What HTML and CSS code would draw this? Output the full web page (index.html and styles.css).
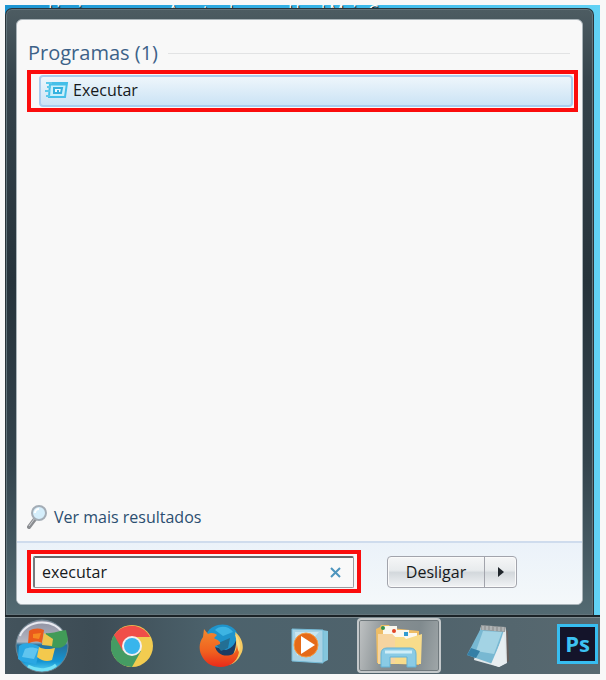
FILE: index.html
```html
<!DOCTYPE html>
<html lang="pt-BR">
<head>
    <meta charset="UTF-8">
    <meta name="viewport" content="width=device-width, initial-scale=1.0">
    <title>Menu Iniciar - Executar</title>
    <link rel="stylesheet" href="styles.css">
</head>
<body>

<div class="desktop">
    <!-- Desktop icon labels, mostly hidden behind the menu -->
    <div class="labels" aria-hidden="true">
        <span>Lixeira</span>
        <span>Avast.ash</span>
        <span>Hard Mais Cao</span>
    </div>

    <!-- Start menu -->
    <main class="menu">
        <div class="panel">
            <section class="results">
                <h1 class="group-title">Programas (1)</h1>
                <div class="highlight">
                    <button type="button" class="result">
                        <svg width="24" height="18" viewBox="0 0 24 18">
                            <path d="M5 2H22L20 16H4Z" fill="#c9effa" stroke="#45bfe8" stroke-width="2"/>
                            <path d="M5 3H22" stroke="#45bfe8" stroke-width="3"/>
                            <path d="M9 7H17L16 12H9Z" fill="#eefaff" stroke="#36b2df" stroke-width="2"/>
                            <path d="M12 9H14V11H12Z" fill="#36b2df"/>
                            <path d="M1 2H7M2 6H6M0 10H5M1 15H5" stroke="#5cc9eb" stroke-width="2"/>
                        </svg>
                        Executar
                    </button>
                </div>
                <a href="#" class="more">
                    <svg width="22" height="26" viewBox="0 0 22 26">
                        <path d="M2 23L8 15" stroke="#8b8d91" stroke-width="4" stroke-linecap="round"/>
                        <path d="M2 22L8 14" stroke="#d0d2d5" stroke-width="1"/>
                        <circle cx="12" cy="9" r="7" fill="#d5eefb" stroke="#a4adb6" stroke-width="2"/>
                        <path d="M8 9a4 4 0 0 1 4-4" stroke="#fff" stroke-width="2" fill="none"/>
                    </svg>
                    Ver mais resultados
                </a>
            </section>

            <form class="footer">
                <div class="highlight search">
                    <input type="text" class="search-input" value="executar" aria-label="Pesquisar programas e arquivos">
                    <button type="button" class="clear" aria-label="Limpar">
                        <svg width="12" height="12" viewBox="0 0 12 12">
                            <path d="M1 2L10 11M10 2L1 11" stroke="#4d94bd" stroke-width="2"/>
                        </svg>
                    </button>
                </div>
                <div class="shutdown">
                    <button type="button" class="shutdown-main">Desligar</button>
                    <button type="button" class="shutdown-more" aria-label="Mais opções">
                        <svg width="6" height="10" viewBox="0 0 6 10">
                            <path d="M0 0L6 5L0 10Z" fill="#20262c"/>
                        </svg>
                    </button>
                </div>
            </form>
        </div>
    </main>

    <!-- Taskbar -->
    <nav class="taskbar">
        <button type="button" class="task start" aria-label="Iniciar">
            <svg width="56" height="54" viewBox="0 0 56 54">
                <defs>
                    <linearGradient id="orb" x1="0" y1="0" x2="0" y2="1">
                        <stop offset="0" stop-color="#8d8fa0"/>
                        <stop offset=".42" stop-color="#b4b7c2"/>
                        <stop offset=".48" stop-color="#26719c"/>
                        <stop offset=".8" stop-color="#1696d4"/>
                        <stop offset="1" stop-color="#5cd6f5"/>
                    </linearGradient>
                </defs>
                <circle cx="28" cy="27" r="26" fill="url(#orb)" stroke="#6d8490" stroke-width="1"/>
                <path d="M6 17C12 0 43 -2 50 17" fill="none" stroke="#e6e8ee" stroke-width="2"/>
                <path d="M15 12C20 9 25 9 30 11L28 24C23 22 19 22 14 25Z" fill="#ea5a1c"/>
                <path d="M19 15L27 14L25 20L19 19Z" fill="#f68a22"/>
                <path d="M32 14C38 15 43 12 52 11L54 20C52 29 45 30 38 28L30 25Z" fill="#419b57"/>
                <path d="M30 14L39 20L38 27L28 26Z" fill="#efc54d"/>
                <path d="M5 27C12 22 21 25 26 28L22 46C15 43 9 44 4 40Z" fill="#2aa7e3"/>
                <path d="M11 30C15 28 20 28 24 30L20 40L8 38Z" fill="#60c5ef"/>
                <path d="M25 28C30 31 37 30 41 29L38 41C33 43 28 42 23 38Z" fill="#f3c94d"/>
                <path d="M14 47C25 53 36 51 42 46" fill="none" stroke="#74e1f6" stroke-width="3"/>
            </svg>
        </button>
        <button type="button" class="task" aria-label="Chrome">
            <svg width="42" height="42" viewBox="0 0 42 42">
                <circle cx="21" cy="21" r="21" fill="#f2cc50"/>
                <path d="M21 21L3 10A21 21 0 0 0 21 42L30 26Z" fill="#459c63"/>
                <path d="M21 21L12 26L3 10A21 21 0 0 1 39 12H21Z" fill="#f04e48"/>
                <circle cx="21" cy="21" r="10" fill="#f3eff0"/>
                <circle cx="21" cy="21" r="8" fill="#38b5ec"/>
            </svg>
        </button>
        <button type="button" class="task" aria-label="Firefox">
            <svg width="44" height="44" viewBox="0 0 44 44">
                <defs>
                    <linearGradient id="fox" x1="0" y1="0" x2="0" y2="1">
                        <stop offset="0" stop-color="#f28a2e"/>
                        <stop offset=".6" stop-color="#f0601f"/>
                        <stop offset="1" stop-color="#e92a1a"/>
                    </linearGradient>
                </defs>
                <circle cx="23" cy="20" r="18" fill="#1c3b62"/>
                <path d="M8 9C14 -2 34 -3 39 11C37 18 34 24 27 26L16 23L10 17Z" fill="#1f94cb"/>
                <path d="M16 6C21 1 30 2 34 8L24 12Z" fill="#3db4e3"/>
                <path d="M17 20L31 14L29 24L22 27Z" fill="#236f94"/>
                <path d="M36 8C43 13 46 23 42 30C38 39 31 42 27 40C36 32 39 20 36 8Z" fill="#f6cb62"/>
                <path d="M5 5L9 10C12 8 16 9 18 11L15 14C18 16 22 17 21 20L16 22C17 30 26 34 34 30C37 28 38 23 38 18C42 25 40 33 35 38C26 46 10 44 4 34C-1 27 0 18 4 13Z" fill="url(#fox)"/>
                <path d="M36 10C41 15 42 22 40 28C38 25 38 17 36 10Z" fill="#f9dd86"/>
            </svg>
        </button>
        <button type="button" class="task" aria-label="Media Player">
            <svg width="38" height="36" viewBox="0 0 38 36">
                <path d="M31 2L37 3V32L31 35Z" fill="#84c6dd"/>
                <path d="M1 1L32 2V35L1 33Z" fill="#a9d3e5" stroke="#74bad6"/>
                <path d="M4 4L28 4L6 28Z" fill="#c8e5f0"/>
                <circle cx="15" cy="17" r="12" fill="#e56a18" stroke="#f39a43" stroke-width="1"/>
                <path d="M10 8L24 17L10 26Z" fill="#fff"/>
            </svg>
        </button>
        <button type="button" class="task active" aria-label="Windows Explorer">
            <svg width="48" height="44" viewBox="0 0 48 44">
                <path d="M1 5L5 3L6 1H14L16 4L44 7V41L2 39Z" fill="#eebd65"/>
                <path d="M8 2H22V10H8Z" fill="#fbf8ee"/>
                <path d="M17 6H34V13H17Z" fill="#fbf8ee"/>
                <path d="M28 9H42V15H28Z" fill="#fbf8ee"/>
                <circle cx="8" cy="4" r="2" fill="#35914d"/>
                <circle cx="19" cy="7" r="2" fill="#e14425"/>
                <path d="M29 8H33V12H29Z" fill="#319bd1"/>
                <path d="M3 10L17 10L20 13H29L31 15L47 10L46 40H3Z" fill="#f8dc8b"/>
                <path d="M3 10L17 10L20 13V39H3Z" fill="#f6d4a0"/>
                <path d="M6 43V30Q6 24 12 24H35Q41 24 41 30V43H32V33H15V43Z" fill="#8acbe5" stroke="#62b2d6"/>
                <path d="M10 28H37" stroke="#d0eef8" stroke-width="3"/>
            </svg>
        </button>
        <button type="button" class="task" aria-label="Bloco de Notas">
            <svg width="44" height="44" viewBox="0 0 44 44">
                <path d="M38 5L42 7L43 37L34 41Z" fill="#665e5c"/>
                <path d="M15 2L40 4L41 39L33 43L8 36Z" fill="#e1e7ea"/>
                <path d="M15 4L38 6L27 40L1 31Z" fill="#78b8d2"/>
                <path d="M17 7L36 8L28 30L10 27Z" fill="#a3d3e4"/>
                <path d="M5 24L14 27L10 34L1 31Z" fill="#357fa6"/>
                <path d="M38 10L40 39L33 43L25 40Z" fill="#e8eef1"/>
                <path d="M15 1L40 3L39 8L15 6Z" fill="#9a9d9e"/>
                <path d="M17 2V6M21 2V6M25 2V6M29 3V7M33 3V7M37 3V7" stroke="#c4c8c9"/>
            </svg>
        </button>
        <button type="button" class="task last" aria-label="Photoshop"><span class="ps">Ps</span></button>
    </nav>
</div>

</body>
</html>
```
FILE: styles.css
```css
* {
    box-sizing: border-box;
}
body {
    margin: 0;
    padding: 5px 6px 6px 5px;
    min-height: 100vh;
    display: flex;
    background-color: #f8f8f8;
    font-family: "Open Sans", "Noto Sans", sans-serif;
    font-size: 16px;
    line-height: 22px;
    color: #16191c;
}
button {
    font: inherit;
    color: inherit;
    padding: 0;
    border: none;
    background: none;
    cursor: pointer;
}
svg {
    display: block;
    flex-shrink: 0;
}
.desktop {
    flex: 1;
    min-width: 0;
    display: flex;
    flex-direction: column;
    background: linear-gradient(to right, #1b94d2, #3ab8ea 60%, #62d2f5);
}
/* only the bottom edge of the labels shows */
.labels {
    height: 3px;
    overflow: hidden;
    display: grid;
    grid-template-columns: 120px 120px 1fr;
    align-items: end;
    padding-left: 43px;
    font-size: 16px;
    line-height: 12px;
    color: #fff;
    text-shadow: 1px 1px 1px #000;
}
.labels span {
    white-space: nowrap;
}

/* Start menu */
.menu {
    flex: 1;
    display: flex;
    margin-right: 6px;
    padding: 10px;
    border: 1px solid #29343a;
    border-bottom: none;
    border-radius: 7px 7px 0 0;
    background: linear-gradient(#4d5c62, #35434b 12%, #26333b 45%, #34444d 75%, #536a72);
    box-shadow: inset 0 0 0 1px #63747b;
}
.panel {
    flex: 1;
    min-width: 0;
    display: flex;
    flex-direction: column;
    border: 1px solid #a9b3b8;
    border-radius: 6px;
    overflow: hidden;
    background-color: #f8f8f8;
}
.results {
    flex: 1;
    display: flex;
    flex-direction: column;
    padding: 18px 4px 11px 10px;
}
.group-title {
    display: flex;
    align-items: center;
    gap: 10px;
    margin: 0 8px 2px 1px;
    font-size: 20px;
    line-height: 30px;
    font-weight: normal;
    color: #3d6288;
}
.group-title::after {
    content: "";
    flex: 1;
    height: 1px;
    background-color: #e2e3e4;
}
.highlight {
    border: 4px solid #fb0d0d;
}
.result {
    display: flex;
    align-items: center;
    gap: 4px;
    width: calc(100% - 9px);
    height: 32px;
    margin: 1px 1px 1px 8px;
    padding: 0 4px 2px;
    border: 2px solid #a9cdee;
    border-radius: 4px;
    background: linear-gradient(#eef6fb, #cbe3f5);
}
.more {
    display: flex;
    align-items: center;
    gap: 5px;
    margin-top: auto;
    color: #2b4e70;
    text-decoration: none;
}
.footer {
    display: flex;
    align-items: center;
    gap: 26px;
    padding: 7px 10px 11px;
    border-top: 2px solid #cfdced;
    background: linear-gradient(#ebf2f9, #f4f8fa);
}
.search {
    position: relative;
    flex: 0 1 334px;
    padding: 2px 3px 1px 2px;
    background-color: #f8f8f8;
}
.search-input {
    display: block;
    width: 100%;
    height: 32px;
    padding: 0 34px 2px 7px;
    border: 1px solid #9a9da2;
    border-top: 2px solid #66696d;
    border-left: 2px solid #76797d;
    border-radius: 2px;
    background-color: #f9f9f9;
    font: inherit;
    color: inherit;
    outline: none;
}
.clear {
    position: absolute;
    right: 15px;
    top: 12px;
}
.shutdown {
    display: flex;
    height: 32px;
    border: 1px solid #a2a4ac;
    border-radius: 4px;
    background: linear-gradient(#f5f6f7, #e8ebed 44%, #d3d8dc 52%, #f1f3f5);
    box-shadow: inset 0 0 0 1px #fafafa;
}
.shutdown-main {
    width: 97px;
    border-right: 1px solid #a2a4ac;
}
.shutdown-more {
    width: 31px;
    display: flex;
    align-items: center;
    justify-content: center;
}

/* Taskbar */
.taskbar {
    display: flex;
    gap: 5px;
    height: 59px;
    overflow: hidden;
    border-top: 2px solid #1b2327;
    box-shadow: inset 0 1px 0 #7e8b90;
    background: linear-gradient(to right, #43535c, #3d4c55 15%, #4c626c 35%, #50636c 70%, #586970);
}
.task {
    flex: 0 0 84px;
    display: flex;
    align-items: center;
    justify-content: center;
}
.start {
    flex-basis: 80px;
    padding-right: 6px;
}
.active {
    margin: 1px 0;
    border: 2px solid #c3c8ca;
    border-radius: 4px;
    background: linear-gradient(100deg, #c0c3c4, #878f92 35%, #808a8e 70%, #a0a7a9);
    box-shadow: inset 0 0 0 1px #70797d;
}
.last {
    flex: 1 0 auto;
    justify-content: flex-end;
    padding: 0 2px 4px 0;
}
.ps {
    width: 41px;
    height: 40px;
    border: 3px solid #37bdf0;
    background-color: #14142a;
    color: #3dc2f3;
    font-size: 22px;
    line-height: 32px;
    font-weight: bold;
    text-align: center;
}
```
